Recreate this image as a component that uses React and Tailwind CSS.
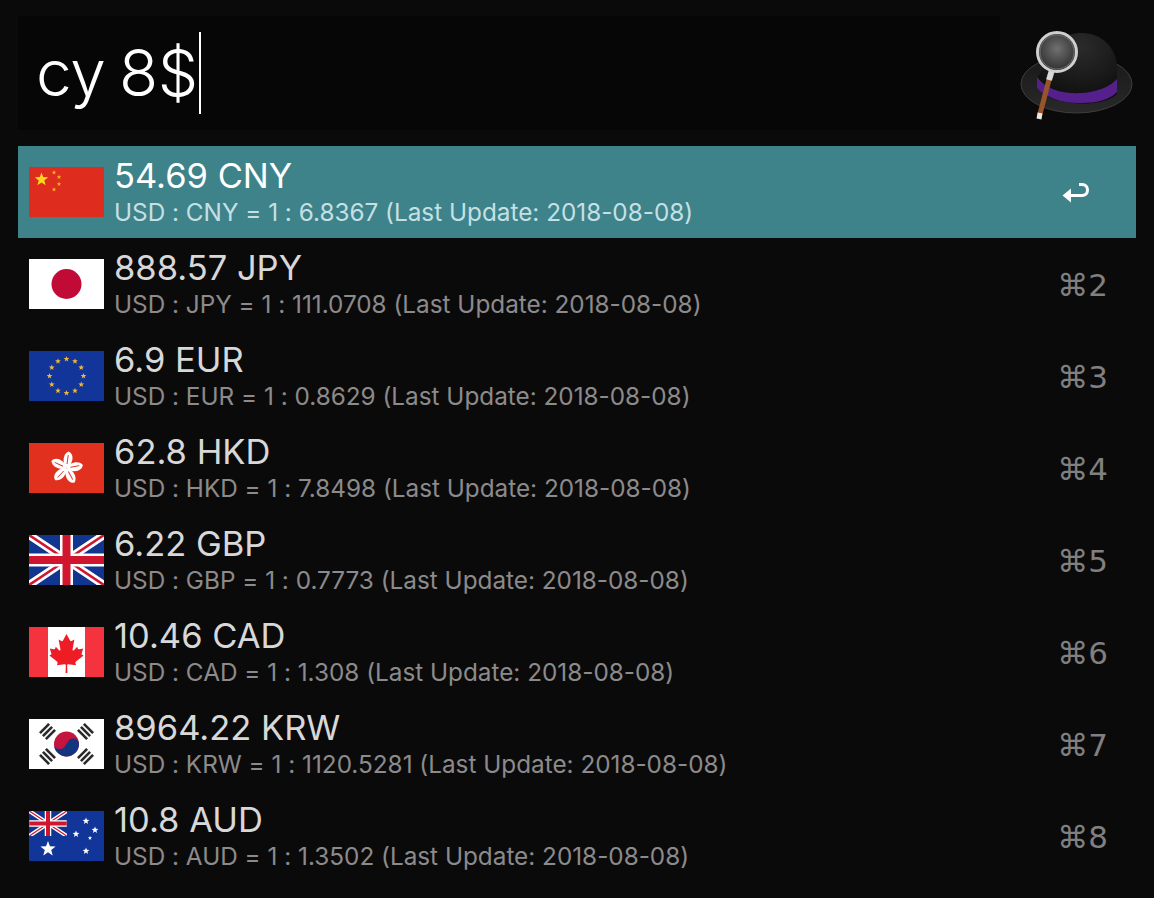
import React from "react";

const Star = ({ cx, cy, r, fill }) => {
  const pts = [];
  for (let i = 0; i < 10; i++) {
    const rad = i % 2 === 0 ? r : r * 0.42;
    const a = (Math.PI / 5) * i - Math.PI / 2;
    pts.push(`${(cx + rad * Math.cos(a)).toFixed(2)},${(cy + rad * Math.sin(a)).toFixed(2)}`);
  }
  return <polygon points={pts.join(" ")} fill={fill} />;
};

const Union = () => (
  <g>
    <rect width="75" height="50" fill="#12358f" />
    <path d="M0 0L75 50M75 0L0 50" stroke="#fff" strokeWidth="8" />
    <path d="M0 0L75 50M75 0L0 50" stroke="#d0162e" strokeWidth="2.6" />
    <path d="M37.5 0V50M0 25H75" stroke="#fff" strokeWidth="13" />
    <path d="M37.5 0V50M0 25H75" stroke="#d0162e" strokeWidth="8" />
  </g>
);

const ChinaFlag = () => (
  <svg viewBox="0 0 75 50" className="w-[75px] h-[50px]">
    <rect width="75" height="50" fill="#de2c1f" />
    <Star cx={12.5} cy={12.5} r={7} fill="#fbd51e" />
    <Star cx={25} cy={5.5} r={2.4} fill="#f6b51c" />
    <Star cx={30} cy={10} r={2.4} fill="#f6b51c" />
    <Star cx={30} cy={17} r={2.4} fill="#f6b51c" />
    <Star cx={25} cy={22.5} r={2.4} fill="#f6b51c" />
  </svg>
);

const JapanFlag = () => (
  <svg viewBox="0 0 75 50" className="w-[75px] h-[50px]">
    <rect width="75" height="50" fill="#fff" />
    <circle cx="37.5" cy="25" r="15" fill="#c20a37" />
  </svg>
);

const EuFlag = () => (
  <svg viewBox="0 0 75 50" className="w-[75px] h-[50px]">
    <rect width="75" height="50" fill="#12359a" />
    {[...Array(12)].map((_, i) => {
      const a = (Math.PI / 6) * i;
      return <Star key={i} cx={37.5 + 17 * Math.sin(a)} cy={25 - 17 * Math.cos(a)} r={3} fill="#f2b632" />;
    })}
  </svg>
);

const HongKongFlag = () => (
  <svg viewBox="0 0 75 50" className="w-[75px] h-[50px]">
    <rect width="75" height="50" fill="#e1301e" />
    {[12, 84, 156, 228, 300].map((r) => (
      <g key={r} transform={`rotate(${r} 37.5 25)`}>
        <path d="M37.5 25C32 21 31 12 36 8.5C42 9 44 19 37.5 25Z" fill="#fff" />
        <path d="M36.5 12L37.2 21" stroke="#e1301e" strokeWidth="0.9" />
      </g>
    ))}
  </svg>
);

const UkFlag = () => (
  <svg viewBox="0 0 75 50" className="w-[75px] h-[50px]">
    <Union />
  </svg>
);

const CanadaFlag = () => (
  <svg viewBox="0 0 75 50" className="w-[75px] h-[50px]">
    <rect width="75" height="50" fill="#fff" />
    <rect width="19" height="50" fill="#f5333f" />
    <rect x="56" width="19" height="50" fill="#f5333f" />
    <path
      d="M37.5 7L34 13.5C33.4 14.4 32.6 14.2 32 13.8L29.6 12.5L31.4 22C31.7 23.6 30.6 24 29.8 23L26.8 19.8L26.2 21.5C26 22.2 25.4 22.4 24.6 22.2L20.8 21.4L22.2 26C22.5 27 22.7 27.5 21.8 27.8L20.4 28.5L28 34.6C28.5 35 28.8 35.4 28.6 36L28 38.2L35.6 37.2C36.2 37.2 36.8 37.6 36.8 38.2L36.6 46H38.4L38.2 38.2C38.2 37.6 38.8 37.2 39.4 37.2L47 38.2L46.4 36C46.2 35.4 46.5 35 47 34.6L54.6 28.5L53.2 27.8C52.3 27.5 52.5 27 52.8 26L54.2 21.4L50.4 22.2C49.6 22.4 49 22.2 48.8 21.5L48.2 19.8L45.2 23C44.4 24 43.3 23.6 43.6 22L45.4 12.5L43 13.8C42.4 14.2 41.6 14.4 41 13.5Z"
      fill="#ee1c25"
    />
  </svg>
);

const Trigram = ({ x, y, rot }) => (
  <g transform={`translate(${x} ${y}) rotate(${rot})`} fill="#2a2a2a">
    <rect x="-6.5" y="-5.5" width="13" height="2.6" />
    <rect x="-6.5" y="-1.3" width="13" height="2.6" />
    <rect x="-6.5" y="2.9" width="13" height="2.6" />
  </g>
);

const KoreaFlag = () => (
  <svg viewBox="0 0 75 50" className="w-[75px] h-[50px]">
    <rect width="75" height="50" fill="#fff" />
    <circle cx="37.5" cy="25" r="12.5" fill="#c4143f" />
    <path
      d="M25 25A12.5 12.5 0 0 0 50 25C50 21.5 47.2 19.5 44 19.5C40.5 19.5 39.5 22 37.5 25C35.5 28 34.5 30 31 30C27.5 30 25 28 25 25Z"
      fill="#12357f"
    />
    <Trigram x={18.5} y={12.5} rot={-45} />
    <Trigram x={56.5} y={12.5} rot={45} />
    <Trigram x={18.5} y={37.5} rot={45} />
    <Trigram x={56.5} y={37.5} rot={-45} />
  </svg>
);

const AustraliaFlag = () => (
  <svg viewBox="0 0 75 50" className="w-[75px] h-[50px]">
    <rect width="75" height="50" fill="#12359a" />
    <svg x="0" y="0" width="38" height="25" viewBox="0 0 75 50">
      <Union />
    </svg>
    <Star cx={19} cy={38} r={8} fill="#fff" />
    <Star cx={57} cy={10} r={3.6} fill="#fff" />
    <Star cx={47} cy={23} r={3.6} fill="#fff" />
    <Star cx={66} cy={19} r={3.6} fill="#fff" />
    <Star cx={61} cy={27} r={2.2} fill="#fff" />
    <Star cx={57} cy={40} r={3.6} fill="#fff" />
  </svg>
);

const AlfredHat = () => (
  <svg viewBox="0 0 114 92" className="w-[114px] h-[92px]">
    <defs>
      <radialGradient id="dome" cx="55%" cy="20%" r="80%">
        <stop offset="0%" stopColor="#2c2b2b" />
        <stop offset="100%" stopColor="#0e0d0e" />
      </radialGradient>
      <radialGradient id="lens" cx="50%" cy="42%" r="60%">
        <stop offset="0%" stopColor="#707070" />
        <stop offset="100%" stopColor="#2a2a2a" />
      </radialGradient>
      <linearGradient id="rim" x1="0" y1="0" x2="0" y2="1">
        <stop offset="0%" stopColor="#191818" />
        <stop offset="100%" stopColor="#2a2929" />
      </linearGradient>
    </defs>
    <ellipse cx="56.5" cy="54" rx="55.5" ry="29" fill="url(#rim)" stroke="#3f3d3d" strokeWidth="1" />
    <path d="M17 48L28 30C30 12 44 3 62 3C82 3 97 18 97 38V64C84 78 34 76 22 62Z" fill="url(#dome)" />
    <path d="M17 47C26 60 44 64 62 63C76 62 90 57 97 49V62C90 70 76 73 62 73C44 74 26 68 17 58Z" fill="#55208c" />
    <path d="M30 46L20 84" stroke="#96552a" strokeWidth="5" />
    <path d="M20 83L19 89" stroke="#e8e8e8" strokeWidth="5" />
    <path d="M32 40L29 50" stroke="#d8d8d8" strokeWidth="6" />
    <circle cx="37" cy="22" r="19.5" fill="url(#lens)" stroke="#cfcfcf" strokeWidth="3" />
    <circle cx="37" cy="22" r="17" fill="none" stroke="#6e6e6e" strokeWidth="1" />
  </svg>
);

const ReturnIcon = () => (
  <svg viewBox="0 0 28 24" className="w-[28px] h-[24px]">
    <path d="M17 2.5H20C23.5 2.5 25.5 5 25.5 8C25.5 11 23.5 13.5 20 13.5H7" fill="none" stroke="#fff" strokeWidth="3" />
    <path d="M0.5 13.5L9 6.5V20.5Z" fill="#fff" />
  </svg>
);

const results = [
  { title: "54.69 CNY", sub: "USD : CNY = 1 : 6.8367 (Last Update: 2018-08-08)", flag: <ChinaFlag /> },
  { title: "888.57 JPY", sub: "USD : JPY = 1 : 111.0708 (Last Update: 2018-08-08)", flag: <JapanFlag />, hint: "⌘2" },
  { title: "6.9 EUR", sub: "USD : EUR = 1 : 0.8629 (Last Update: 2018-08-08)", flag: <EuFlag />, hint: "⌘3" },
  { title: "62.8 HKD", sub: "USD : HKD = 1 : 7.8498 (Last Update: 2018-08-08)", flag: <HongKongFlag />, hint: "⌘4" },
  { title: "6.22 GBP", sub: "USD : GBP = 1 : 0.7773 (Last Update: 2018-08-08)", flag: <UkFlag />, hint: "⌘5" },
  { title: "10.46 CAD", sub: "USD : CAD = 1 : 1.308 (Last Update: 2018-08-08)", flag: <CanadaFlag />, hint: "⌘6" },
  { title: "8964.22 KRW", sub: "USD : KRW = 1 : 1120.5281 (Last Update: 2018-08-08)", flag: <KoreaFlag />, hint: "⌘7" },
  { title: "10.8 AUD", sub: "USD : AUD = 1 : 1.3502 (Last Update: 2018-08-08)", flag: <AustraliaFlag />, hint: "⌘8" },
];

const Row = ({ item, selected }) => (
  <div className={`h-[92px] flex items-center pl-[10.5px] pr-[28px] ${selected ? "bg-[#3e828a]" : ""}`}>
    <div className="w-[75px] h-[50px] shrink-0 flex">{item.flag}</div>
    <div className="ml-[10.5px] flex-1 min-w-0 [font-feature-settings:'calt'_0]">
      <div className={`text-[34.5px] leading-[40px] -mt-[2px] mb-[2px] ${selected ? "text-white" : "text-[#d8d8d8]"}`}>
        {item.title}
      </div>
      <div className={`text-[24.3px] leading-[28px] ${selected ? "text-[#c5e0e4]" : "text-[#8c8a8a]"}`}>{item.sub}</div>
    </div>
    {selected ? (
      <div className="mr-[18px] mt-[4px] flex">
        <ReturnIcon />
      </div>
    ) : (
      <div className="text-[31px] font-medium mt-[2px] text-[#817f7f] font-['DejaVu_Sans','Inter',sans-serif]">
        {item.hint}
      </div>
    )}
  </div>
);

export default function App() {
  return (
    <div className="w-[1154px] h-[898px] bg-[#0b0a0b] overflow-hidden font-['Inter','Liberation_Sans',sans-serif]">
      <div className="h-[146px] flex pl-[18px] pr-[20px] pt-[16px]">
        <div className="w-[982px] h-[114px] bg-[#070606] flex items-center pl-[18px]">
          <span className="text-[64px] leading-none text-white font-light tracking-[-0.4px] [word-spacing:-4px]">
            cy 8$
          </span>
          <span className="w-[2px] h-[82px] bg-white ml-[1px]" />
        </div>
        <div className="ml-auto mt-[14px]">
          <AlfredHat />
        </div>
      </div>
      <div className="mx-[18px]">
        {results.map((item, i) => (
          <Row key={item.title} item={item} selected={i === 0} />
        ))}
      </div>
    </div>
  );
}
